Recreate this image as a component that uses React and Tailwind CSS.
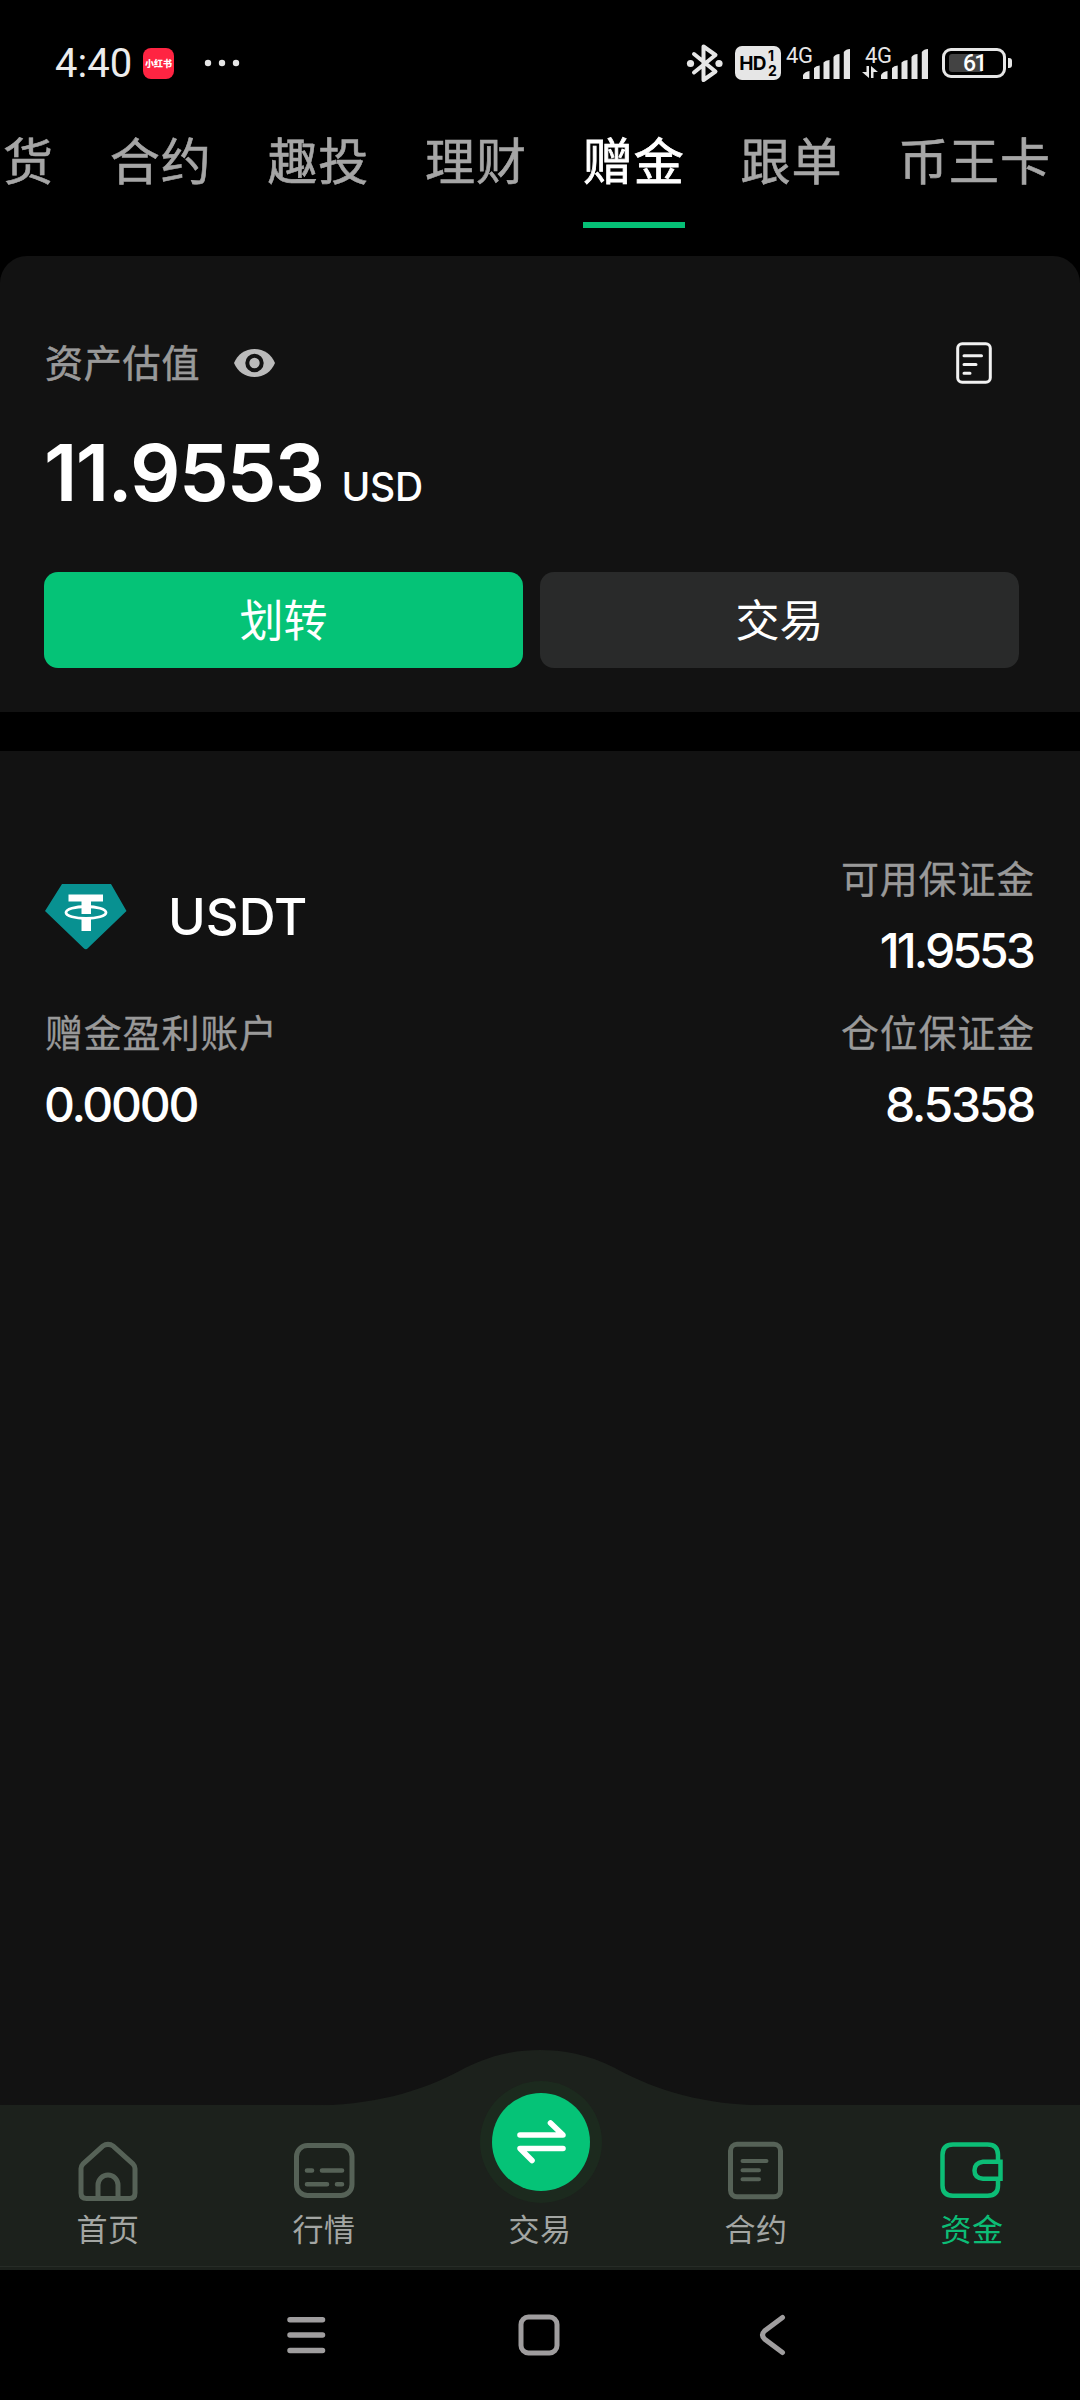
const TABS = ["货", "合约", "趣投", "理财", "赠金", "跟单", "币王卡"];

function Bars({ className }) {
  return (
    <svg width="48" height="32" viewBox="0 0 48 32" fill="#e6e6e6" className={className}>
      <path d="M1 31V27Q3 23.500 7.500 23V31Z" />
      <path d="M12 31V20Q14 17.500 17.700 17.500V31Z" />
      <path d="M21.500 31V14.500Q23.500 12 27.500 12V31Z" />
      <path d="M31.500 31V9Q33.500 6 37.500 6V31Z" />
      <path d="M41.800 31V4Q44 1 48 1V31Z" />
    </svg>
  );
}

function StatusBar() {
  return (
    <div className="flex h-[126px] items-start pl-[55px] pt-[42px] font-['Roboto']">
      <span className="mt-[1px] h-[42px] w-[77px] whitespace-nowrap text-[40px] leading-[42px] text-[#ececec]">4:40</span>
      <span className="ml-[11px] mt-[6px] flex h-[31px] w-[31px] items-center justify-center rounded-[8px] bg-[#ff2442] font-['Noto_Sans_CJK_SC'] text-[9px] font-black leading-none text-white">
        小红书
      </span>
      <svg width="36" height="8" viewBox="0 0 36 8" fill="#e6e6e6" className="ml-[30px] mt-[17px]">
        <circle cx="4" cy="4" r="3.200" />
        <circle cx="18" cy="4" r="3.200" />
        <circle cx="32" cy="4" r="3.200" />
      </svg>
      <svg width="38" height="40" viewBox="0 0 38 40" className="ml-[445px] mt-[1px]" fill="none" stroke="#e6e6e6" strokeWidth="4" strokeLinejoin="round" strokeLinecap="round">
        <path d="M9 11 30.500 28.500 18.500 37V3.500L30.500 12 9 29.500" />
        <circle cx="5.500" cy="20.500" r="3.600" fill="#e6e6e6" stroke="none" />
        <circle cx="34" cy="20.500" r="3.600" fill="#e6e6e6" stroke="none" />
      </svg>
      <span className="ml-[12px] mt-[4px] flex h-[34px] w-[46px] items-center justify-center gap-[2px] rounded-[7px] bg-[#e6e6e6] font-['Inter'] text-[19px] font-bold leading-none text-black">
        <span className="tracking-[-0.5px]">HD</span>
        <span className="flex flex-col text-[14px] leading-[15px]">
          <span>1</span>
          <span>2</span>
        </span>
      </span>
      <span className="ml-[5px] mt-[2px] w-[16px] whitespace-nowrap text-[22px] leading-[24px] tracking-[-0.3px] text-[#e6e6e6]">4G</span>
      <Bars className="mt-[6px]" />
      <span className="ml-[15px] mt-[2px] w-[15px] whitespace-nowrap text-[22px] leading-[24px] tracking-[-0.3px] text-[#e6e6e6]">
        4G
        <svg width="16" height="12" viewBox="0 0 16 12" className="-ml-[3px] -mt-[2px]" fill="#e6e6e6">
          <path d="M4.500 0H7V12L0 6H4.500ZM9 12V0L16 6H11.500V12Z" />
        </svg>
      </span>
      <Bars className="mt-[6px]" />
      <span className="ml-[14px] mt-[6px] flex h-[30px] w-[64px] items-center rounded-[9px] border-[3px] border-[#e6e6e6] pl-[4px]">
        <span className="h-[18px] w-[33px] rounded-l-[3px] bg-[#434343]" />
        <span className="-ml-[19px] text-[23px] font-medium leading-none tracking-[-1.800px] text-white">61</span>
      </span>
      <span className="ml-[2px] mt-[16px] h-[10px] w-[4px] rounded-r-[3px] bg-[#e6e6e6]" />
    </div>
  );
}

function Tabs() {
  return (
    <div className="-mt-[6px] flex h-[136px] gap-[55.700px] pl-[3px]">
      {TABS.map((t) => (
        <div
          key={t}
          className={
            "flex h-[108px] shrink-0 flex-col whitespace-nowrap text-[50px] leading-[77px] tracking-[1px] " +
            (t === "赠金"
              ? "border-b-[6px] border-[#05c076] text-white [-webkit-text-stroke:0.8px_#fff]"
              : "text-[#a6a6a6] [-webkit-text-stroke:0.6px_#a6a6a6]")
          }
        >
          {t}
        </div>
      ))}
    </div>
  );
}

function AssetCard() {
  return (
    <div className="h-[456px] rounded-t-[27px] bg-[#121212] px-[44px] pt-[80px]">
      <div className="flex h-[54px] items-center">
        <span className="-mt-[4px] pl-px text-[38px] leading-[58px] tracking-[0.8px] text-[#999] [-webkit-text-stroke:0.6px_#999]">资产估值</span>
        <svg width="41" height="28" viewBox="0 0 41 28" className="ml-[34px]">
          <path d="M20.500 0C11 0 3.500 5.500 0 14 3.500 22.500 11 28 20.500 28S37.500 22.500 41 14C37.500 5.500 30 0 20.500 0Z" fill="#bbb" />
          <circle cx="20.500" cy="14" r="7.200" fill="#bbb" stroke="#121212" strokeWidth="4" />
        </svg>
        <svg width="36" height="42" viewBox="0 0 36 42" className="ml-auto mr-[44px]" fill="none" stroke="#f2f2f2" strokeWidth="3" strokeLinecap="round">
          <rect x="1.700" y="1.700" width="32.600" height="38.600" rx="4.500" />
          <path d="M8 13.800H25.500M8 22.500H20M8 31.300H14" />
        </svg>
      </div>
      <div className="mt-[32px] flex h-[100px] items-baseline font-['Inter'] text-white">
        <span className="text-[79px] font-semibold leading-[100px] tracking-[-1.700px]">11.9553</span>
        <span className="ml-[18px] text-[39px] font-medium tracking-[-0.2px]">USD</span>
      </div>
      <div className="mt-[50px] flex gap-[17px]">
        <button className="h-[96px] w-[479px] rounded-[14px] bg-[#05c377] pb-[5px] text-[44px] leading-[66px] text-white">划转</button>
        <button className="h-[96px] w-[479px] rounded-[14px] bg-[#292a2a] pb-[5px] text-[44px] leading-[66px] text-white">交易</button>
      </div>
    </div>
  );
}

function Stat({ label, value, right, tracking }) {
  return (
    <div className={"flex flex-col " + (right ? "items-end" : "items-start")}>
      <span className="-mt-[5px] h-[58px] text-[38px] leading-[58px] tracking-[0.8px] text-[#999] [-webkit-text-stroke:0.3px_#999]">{label}</span>
      <span className={"mt-[15px] h-[60px] font-['Inter'] text-[48px] font-medium leading-[60px] text-white " + tracking}>{value}</span>
    </div>
  );
}

function UsdtIcon() {
  return (
    <svg width="82" height="66" viewBox="0 0 82 66">
      <path d="M17 0H66L81.500 27 43 64Q41 66.500 38.500 64L0 27Z" fill="#089191" />
      <path d="M23.500 10.500H58V17.500H46V30H36.500V17.500H23.500ZM36.500 35H46V47H36.500Z" fill="#fff" />
      <ellipse cx="41" cy="28.500" rx="20" ry="6" fill="none" stroke="#fff" strokeWidth="2.800" />
    </svg>
  );
}

function Holdings() {
  return (
    <div className="mt-[39px] flex h-[1354px] flex-col bg-[#121212] px-[45px] pt-[102px]">
      <div className="flex h-[154px] justify-between">
        <div className="flex pt-[31px]">
          <UsdtIcon />
          <span className="ml-[41px] mt-[2px] font-['Inter'] text-[51px] font-medium leading-[62px] text-white">USDT</span>
        </div>
        <Stat label="可用保证金" value="11.9553" right tracking="tracking-[-2.900px] pr-[2px]" />
      </div>
      <div className="flex justify-between">
        <Stat label="赠金盈利账户" value="0.0000" tracking="tracking-[-2.300px] -ml-px" />
        <Stat label="仓位保证金" value="8.5358" right tracking="tracking-[-2.300px] pr-px" />
      </div>
    </div>
  );
}

const ICONS = {
  首页: (
    <svg width="64" height="64" viewBox="0 0 64 64" fill="none" stroke="#566257" strokeWidth="5" strokeLinejoin="round">
      <path d="M5 28.500Q5 26 6.800 24.200L26.500 6.300Q32 2.500 37.500 6.300L57.200 24.200Q59 26 59 28.500V53Q59 58.500 53.500 58.500H10.500Q5 58.500 5 53Z" />
      <path d="M22 58V45A10 10 0 0 1 42 45V58" />
    </svg>
  ),
  行情: (
    <svg width="64" height="64" viewBox="0 0 64 64" fill="none" stroke="#566257" strokeWidth="5" strokeLinecap="round">
      <rect x="4.500" y="5.500" width="55.500" height="50" rx="11" />
      <path d="M15 30.500H20M30 30.500H50M15 44.300H35M45 44.300H50" strokeWidth="4.600" />
    </svg>
  ),
  合约: (
    <svg width="64" height="64" viewBox="0 0 64 64" fill="none" stroke="#566257" strokeWidth="5" strokeLinecap="round">
      <rect x="6.500" y="4.300" width="50" height="52.500" rx="6.500" />
      <path d="M18.500 21H42.500M18.500 30.200H35M18.500 39.300H35" strokeWidth="4" />
    </svg>
  ),
  资金: (
    <svg width="64" height="64" viewBox="0 0 64 64" fill="none" stroke="#0cbd76" strokeWidth="4.500">
      <path d="M58 22V15Q58 4.500 47.500 4.500H13Q2.500 4.500 2.500 15V45.500Q2.500 55.700 13 55.700H47.500Q58 55.700 58 45.500V39" />
      <path d="M60.500 21.800H43Q34.500 23 34.500 30.500T43 38.700H60.500Z" />
    </svg>
  ),
};

function TabBar() {
  return (
    <div className="relative flex h-[165px] bg-[#1c211c]">
      <svg width="460" height="56" viewBox="0 0 460 56" className="absolute left-[310px] top-[-55px]" fill="#1c211c">
        <path d="M0 55.500C60 55.500 110 43 155 18C182 4 208 0 230 0C252 0 278 4 305 18C350 43 400 55.500 460 55.500V56H0Z" />
      </svg>
      <svg width="124" height="124" viewBox="0 0 124 124" className="absolute left-[479px] top-[-25px]">
        <circle cx="62" cy="62" r="61" fill="#1c2a1e" />
        <circle cx="62" cy="62" r="49" fill="#05c377" />
        <path d="M41 55H84L71.500 43M84 68.500H41L53 80.500" fill="none" stroke="#fff" strokeWidth="5.600" strokeLinecap="round" strokeLinejoin="round" />
      </svg>
      {["首页", "行情", "交易", "合约", "资金"].map((n) => (
        <div key={n} className="flex w-[216px] flex-col items-center pt-[35px]">
          <div className="h-[64px]">{ICONS[n]}</div>
          <span className={"text-[31px] leading-[48px] tracking-[0.5px] " + (n === "资金" ? "text-[#0cbd76]" : "text-[#a3a6a3]")}>{n}</span>
        </div>
      ))}
      <div className="absolute bottom-[3px] left-0 h-px w-full bg-[#272c27]" />
    </div>
  );
}

function SystemNav() {
  return (
    <div className="flex h-[130px] items-center pl-[285px]">
      <svg width="42" height="42" viewBox="0 0 42 42" stroke="#9f9d9e" strokeWidth="5.500" strokeLinecap="round">
        <path d="M5 5.700H37.500M5 21H37.500M5 36.500H37.500" />
      </svg>
      <svg width="42" height="42" viewBox="0 0 42 42" className="ml-[191px]" fill="none" stroke="#9f9d9e" strokeWidth="5">
        <rect x="3" y="3" width="36" height="36" rx="7.500" />
      </svg>
      <svg width="28" height="42" viewBox="0 0 28 42" className="ml-[199px]" fill="none" stroke="#9f9d9e" strokeWidth="5" strokeLinecap="round">
        <path d="M23.500 3.500 5.500 17Q1.500 21 5.500 25L23.500 38.500" />
      </svg>
    </div>
  );
}

export default function App() {
  return (
    <div className="h-[2400px] w-[1080px] overflow-hidden bg-black font-['Noto_Sans_CJK_SC',sans-serif]">
      <StatusBar />
      <Tabs />
      <AssetCard />
      <Holdings />
      <TabBar />
      <SystemNav />
    </div>
  );
}
